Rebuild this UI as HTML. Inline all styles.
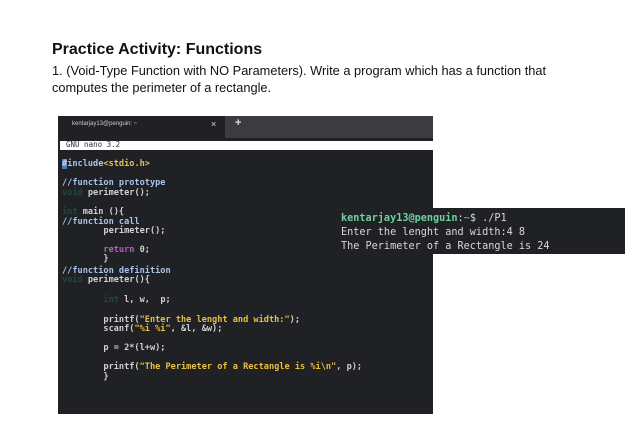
<!DOCTYPE html>
<html><head><style>
body{margin:0;width:639px;height:432px;background:#fff;position:relative;overflow:hidden;font-family:"Liberation Sans",sans-serif}
.a{position:absolute;white-space:pre}
.m{font-family:"DejaVu Sans Mono","Liberation Mono",monospace;font-size:8.6px;font-weight:bold;color:#d0d0d0;position:absolute;white-space:pre;left:62px;line-height:9px;margin-top:2px}
.c{color:#a8c4ea}.k{color:#1d4a3a}.p{color:#b060c0}.s{color:#e8c040}.y{color:#e0c060}
</style></head><body>
<div class="a" style="left:52px;top:41px;font-size:16px;font-weight:bold;color:#111">Practice Activity: Functions</div>
<div class="a" style="left:52px;top:63px;font-size:12.8px;color:#111">1. (Void-Type Function with NO Parameters). Write a program which has a function that</div>
<div class="a" style="left:52px;top:80px;font-size:12.8px;color:#111">computes the perimeter of a rectangle.</div>

<div style="position:absolute;left:58px;top:116px;width:375px;height:298px;background:#202124"></div>
<div style="position:absolute;left:225px;top:116px;width:208px;height:22px;background:#3b3c3f"></div>
<div class="a" style="left:72px;top:121px;font-size:6px;color:#ccc">kentarjay13@penguin: ~</div>
<div class="a" style="left:211px;top:119px;font-size:9px;color:#ddd">×</div>
<div class="a" style="left:235px;top:117px;font-size:11px;font-weight:bold;color:#ddd">+</div>
<div style="position:absolute;left:60px;top:141px;width:373px;height:9px;background:#fff"></div>
<div class="a" style="left:66px;top:140px;font-family:'DejaVu Sans Mono',monospace;font-size:7.5px;color:#333">GNU nano 3.2</div>

<div class="m" style="top:158px"><span style="background:#4a7ab0">#</span><span class="c">include</span><span class="y">&lt;stdio.h&gt;</span></div>
<div class="m c" style="top:177px">//function prototype</div>
<div class="m" style="top:187px"><span class="k">void</span> perimeter();</div>
<div class="m" style="top:206px"><span class="k">int</span> main (){</div>
<div class="m c" style="top:216px">//function call</div>
<div class="m" style="top:225px">        perimeter();</div>
<div class="m" style="top:244px">        <span class="p">return</span> 0;</div>
<div class="m" style="top:253px">        }</div>
<div class="m c" style="top:265px">//function definition</div>
<div class="m" style="top:274px"><span class="k">void</span> perimeter(){</div>
<div class="m" style="top:294px">        <span class="k">int</span> l, w,  p;</div>
<div class="m" style="top:314px">        printf(<span class="s">"Enter the lenght and width:"</span>);</div>
<div class="m" style="top:323px">        scanf(<span class="s">"%i %i"</span>, &amp;l, &amp;w);</div>
<div class="m" style="top:342px">        p = 2*(l+w);</div>
<div class="m" style="top:361px">        printf(<span class="s">"The Perimeter of a Rectangle is %i\n"</span>, p);</div>
<div class="m" style="top:371px">        }</div>

<div style="position:absolute;left:333px;top:208px;width:292px;height:46px;background:#202124"></div>
<div class="a" style="left:341px;top:212px;font-family:'DejaVu Sans Mono',monospace;font-size:10.2px;color:#d8d8d8;line-height:14px"><span style="color:#6fd0a0;font-weight:bold">kentarjay13@penguin</span>:<span style="color:#8ab4f8">~</span>$ ./P1
Enter the lenght and width:4 8
The Perimeter of a Rectangle is 24</div>
</body></html>
